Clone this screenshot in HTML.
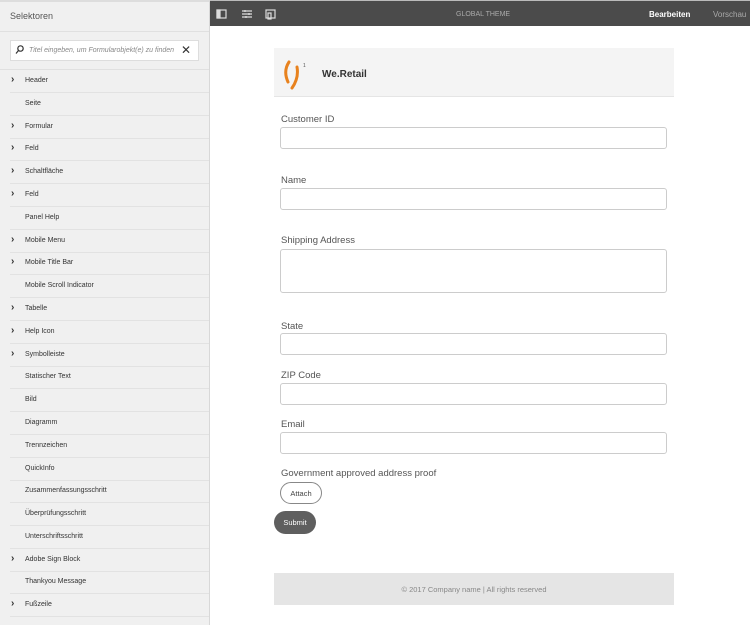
<!DOCTYPE html>
<html><head><meta charset="utf-8"><style>
*{box-sizing:border-box;margin:0;padding:0}
body{width:750px;height:625px;position:relative;overflow:hidden;background:#fff;font-family:"Liberation Sans",sans-serif}
#side{position:absolute;left:0;top:0;width:210px;height:625px;background:#f0f0f0;border-right:1px solid #d8d8d8;border-top:2px solid #ddd}
#side .t{position:absolute;left:10px;top:9px;font-size:9px;color:#555}
#side .hl{position:absolute;left:0;top:29px;width:209px;border-top:1px solid #e0e0e0}
.search{position:absolute;left:10px;top:38px;width:189px;height:21px;background:#fff;border:1px solid #ddd;font-size:7px;color:#888;font-style:italic;padding:6px 0 0 18px}
.search .x{position:absolute;right:7px;top:2px;font-size:12px;color:#333;font-style:normal}
.hl2{position:absolute;left:0;top:67px;width:209px;border-top:1px solid #e0e0e0}
.it{position:absolute;left:10px;width:199px;height:22.8px;border-bottom:1px solid #e2e2e2;font-size:7px;color:#333;padding:7px 0 0 15px}
.it .c{position:absolute;left:1px;top:4px;font-size:10px;color:#333;font-weight:bold}
#top{position:absolute;left:210px;top:0;width:540px;height:26px;background:#4b4b4b;border-top:1px solid #bbb}
#top .g{position:absolute;left:246px;top:10px;font-size:7px;color:#aaa}
#top .b{position:absolute;left:439px;top:9px;font-size:8px;color:#fff;font-weight:bold}
#top .v{position:absolute;left:503px;top:9px;font-size:8px;color:#aaa}
.hdr{position:absolute;left:274px;top:48px;width:400px;height:49px;background:#f4f4f4;border-bottom:1px solid #e5e5e5}
.hdr .n{position:absolute;left:48px;top:21px;font-size:10px;font-weight:bold;color:#333}
.lb{position:absolute;left:281px;font-size:9.5px;color:#555}
.in{position:absolute;left:280px;width:387px;height:22px;border:1px solid #ccc;border-radius:3px;background:#fff}
.btn{position:absolute;font-size:7.5px;border-radius:12px;text-align:center}
.ft{position:absolute;left:274px;top:573px;width:400px;height:32px;background:#e5e5e5;font-size:7.5px;color:#888;text-align:center;padding-top:12px}
</style></head><body>
<div id="side"><div class="t">Selektoren</div><div class="hl"></div>
<div class="search"><svg style="position:absolute;left:4px;top:4px" width="9" height="10" fill="none" stroke="#333" stroke-width="1.2"><circle cx="5.5" cy="3.5" r="2.7"/><path d="M3.5 5.5L1 8.5"/></svg>Titel eingeben, um Formularobjekt(e) zu finden<span class="x">✕</span></div>
<div class="hl2"></div>
<div class="it" style="top:68px"><span class="c">›</span>Header</div>
<div class="it" style="top:91px">Seite</div>
<div class="it" style="top:114px"><span class="c">›</span>Formular</div>
<div class="it" style="top:136px"><span class="c">›</span>Feld</div>
<div class="it" style="top:159px"><span class="c">›</span>Schaltfläche</div>
<div class="it" style="top:182px"><span class="c">›</span>Feld</div>
<div class="it" style="top:205px">Panel Help</div>
<div class="it" style="top:228px"><span class="c">›</span>Mobile Menu</div>
<div class="it" style="top:250px"><span class="c">›</span>Mobile Title Bar</div>
<div class="it" style="top:273px">Mobile Scroll Indicator</div>
<div class="it" style="top:296px"><span class="c">›</span>Tabelle</div>
<div class="it" style="top:319px"><span class="c">›</span>Help Icon</div>
<div class="it" style="top:342px"><span class="c">›</span>Symbolleiste</div>
<div class="it" style="top:364px">Statischer Text</div>
<div class="it" style="top:387px">Bild</div>
<div class="it" style="top:410px">Diagramm</div>
<div class="it" style="top:433px">Trennzeichen</div>
<div class="it" style="top:456px">QuickInfo</div>
<div class="it" style="top:478px">Zusammenfassungsschritt</div>
<div class="it" style="top:501px">Überprüfungsschritt</div>
<div class="it" style="top:524px">Unterschriftsschritt</div>
<div class="it" style="top:547px"><span class="c">›</span>Adobe Sign Block</div>
<div class="it" style="top:569px">Thankyou Message</div>
<div class="it" style="top:592px"><span class="c">›</span>Fußzeile</div>
</div>
<div id="top">
<svg style="position:absolute;left:6px;top:8px" width="60" height="12" fill="none" stroke="#ddd" stroke-width="1.2">
<rect x="1" y="1" width="9" height="8"/><rect x="1" y="1" width="3" height="8" fill="#ddd"/>
<path d="M26 2h10M26 5h10M26 8h10"/><path d="M29 1v2M33 4v2M30 7v2"/>
<rect x="50" y="1" width="9" height="8"/><rect x="52" y="4" width="3" height="6"/></svg>
<div class="g">GLOBAL THEME</div><div class="b">Bearbeiten</div><div class="v">Vorschau</div></div>
<div class="hdr"><svg style="position:absolute;left:8px;top:10px" width="30" height="32"><path d="M7 4 Q1 13 6 24" stroke="#e8821e" stroke-width="3" fill="none" stroke-linecap="round"/><path d="M15 9 Q17 20 10 30" stroke="#e8821e" stroke-width="3" fill="none" stroke-linecap="round"/><text x="21" y="9" font-size="5" fill="#555">1</text></svg><div class="n">We.Retail</div></div>
<div class="lb" style="top:114px">Customer ID</div><div class="in" style="top:127px"></div>
<div class="lb" style="top:175px">Name</div><div class="in" style="top:188px"></div>
<div class="lb" style="top:235px">Shipping Address</div><div class="in" style="top:249px;height:44px"></div>
<div class="lb" style="top:321px">State</div><div class="in" style="top:333px"></div>
<div class="lb" style="top:370px">ZIP Code</div><div class="in" style="top:383px"></div>
<div class="lb" style="top:419px">Email</div><div class="in" style="top:432px"></div>
<div class="lb" style="top:468px">Government approved address proof</div>
<div class="btn" style="left:280px;top:482px;width:42px;height:22px;border:1px solid #888;color:#444;padding-top:6px">Attach</div>
<div class="btn" style="left:274px;top:511px;width:42px;height:23px;background:#5f5f5f;color:#fff;padding-top:7px">Submit</div>
<div class="ft">© 2017 Company name | All rights reserved</div>
</body></html>
